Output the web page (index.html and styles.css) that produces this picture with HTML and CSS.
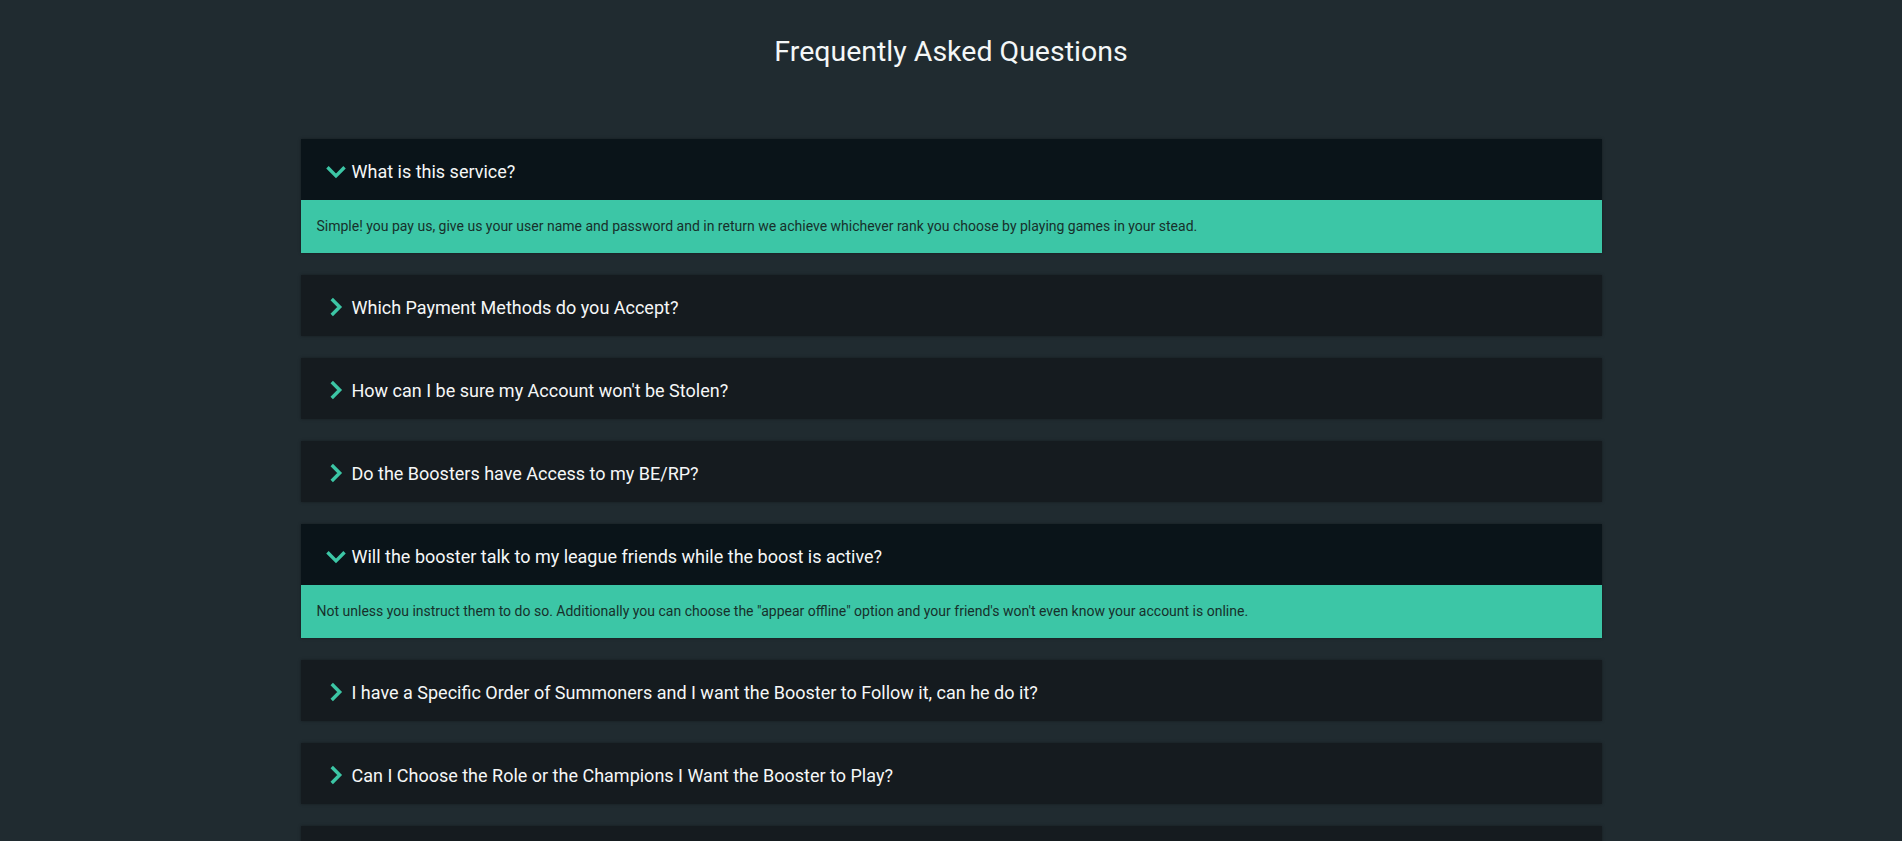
FILE: index.html
```html
<!DOCTYPE html>
<html lang="en">
<head>
<meta charset="utf-8">
<title>FAQ</title>
<link rel="stylesheet" href="styles.css">
</head>
<body>
<main class="page">
  <h1 class="title">Frequently Asked Questions</h1>
  <section class="faq">
    <div class="item open">
      <div class="q"><svg class="chev" viewBox="0 0 18 18"><polyline points="2,6 9,13 16,6"/></svg><span>What is this service?</span></div>
      <div class="a">Simple! you pay us, give us your user name and password and in return we achieve whichever rank you choose by playing games in your stead.</div>
    </div>
    <div class="item">
      <div class="q"><svg class="chev" viewBox="0 0 18 18"><polyline points="5.5,2.5 12,9 5.5,15.5"/></svg><span>Which Payment Methods do you Accept?</span></div>
    </div>
    <div class="item">
      <div class="q"><svg class="chev" viewBox="0 0 18 18"><polyline points="5.5,2.5 12,9 5.5,15.5"/></svg><span>How can I be sure my Account won't be Stolen?</span></div>
    </div>
    <div class="item">
      <div class="q"><svg class="chev" viewBox="0 0 18 18"><polyline points="5.5,2.5 12,9 5.5,15.5"/></svg><span>Do the Boosters have Access to my BE/RP?</span></div>
    </div>
    <div class="item open">
      <div class="q"><svg class="chev" viewBox="0 0 18 18"><polyline points="2,6 9,13 16,6"/></svg><span>Will the booster talk to my league friends while the boost is active?</span></div>
      <div class="a">Not unless you instruct them to do so. Additionally you can choose the "appear offline" option and your friend's won't even know your account is online.</div>
    </div>
    <div class="item">
      <div class="q"><svg class="chev" viewBox="0 0 18 18"><polyline points="5.5,2.5 12,9 5.5,15.5"/></svg><span>I have a Specific Order of Summoners and I want the Booster to Follow it, can he do it?</span></div>
    </div>
    <div class="item">
      <div class="q"><svg class="chev" viewBox="0 0 18 18"><polyline points="5.5,2.5 12,9 5.5,15.5"/></svg><span>Can I Choose the Role or the Champions I Want the Booster to Play?</span></div>
    </div>
    <div class="item">
      <div class="q"><svg class="chev" viewBox="0 0 18 18"><polyline points="5.5,2.5 12,9 5.5,15.5"/></svg><span>How Long will it Take to Complete my Order?</span></div>
    </div>
  </section>
</main>
</body>
</html>
```
FILE: styles.css
```css
html, body {
  margin: 0;
  padding: 0;
}
body {
  background: #202b30;
  font-family: Roboto, "Liberation Sans", sans-serif;
  color: #ffffff;
  overflow: hidden;
}
.page {
  width: 1301px;
  margin: 0 auto;
  padding-top: 35px;
}
.title {
  margin: 0;
  text-align: center;
  font-size: 28.5px;
  font-weight: 400;
  line-height: 34px;
  color: #f4f7f7;
}
.faq {
  margin-top: 70px;
  display: flex;
  flex-direction: column;
  gap: 22px;
}
.item {
  background: #151b1f;
  box-shadow: 0 0 3px rgba(0,0,0,0.35);
}
.item.open {
  background: #0a1419;
}
.q {
  height: 61px;
  box-sizing: border-box;
  padding-top: 3px;
  display: flex;
  align-items: center;
  padding-left: 24px;
  font-size: 18px;
  color: #f5f7f7;
}
.chev {
  width: 22px;
  height: 22px;
  margin-right: 5px;
  fill: none;
  stroke: #3cc6a5;
  stroke-width: 2.8;
  stroke-linecap: butt;
  stroke-linejoin: miter;
}
.a {
  background: #3cc6a6;
  color: #17302b;
  font-size: 14px;
  line-height: 18px;
  padding: 17px 16px 18px;
}
```
